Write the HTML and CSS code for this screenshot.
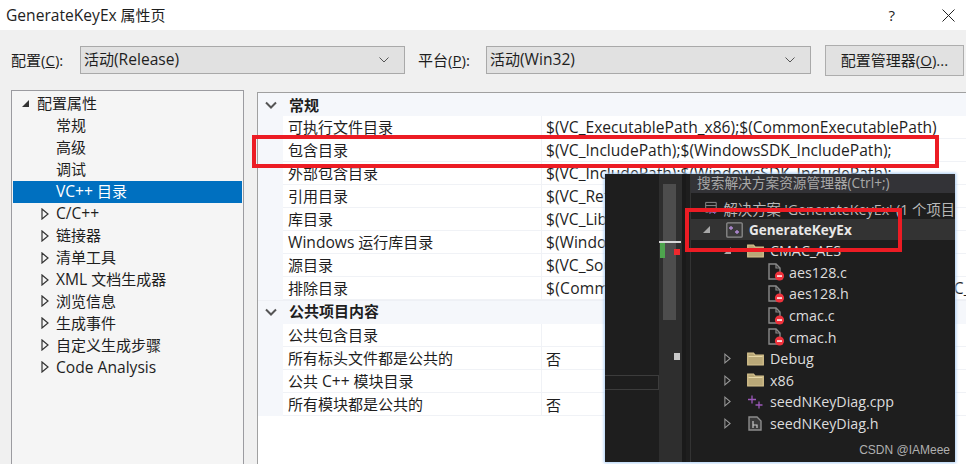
FILE: index.html
```html
<!DOCTYPE html>
<html lang="zh-CN">
<head>
<meta charset="utf-8">
<title>GenerateKeyEx 属性页</title>
<link rel="stylesheet" href="styles.css">
</head>
<body>
<svg class="defs" width="0" height="0">
  <symbol id="closed" viewBox="0 0 8 12"><path d="M1 1 L7 6 L1 11 Z" fill="none" stroke="currentColor" stroke-width="1.2"/></symbol>
  <symbol id="chev" viewBox="0 0 12 8"><path d="M1 1.5 L6 6.5 L11 1.5" fill="none" stroke="currentColor" stroke-width="2"/></symbol>
  <symbol id="down" viewBox="0 0 10 6"><path d="M.5 .5 L5 5 L9.5 .5" fill="none" stroke="currentColor" stroke-width="1"/></symbol>
  <symbol id="file" viewBox="0 0 18 18">
    <path d="M2 1 H9 L13 5 V16 H2 Z" fill="none" stroke="#8a8a8a" stroke-width="1.4"/>
    <path d="M9 1 V5 H13" fill="none" stroke="#8a8a8a" stroke-width="1.2"/>
    <circle cx="12.5" cy="13" r="4.6" fill="#f0323c"/>
    <rect x="10" y="12.3" width="5" height="1.5" fill="#fff"/>
  </symbol>
  <symbol id="folder" viewBox="0 0 17 14">
    <path d="M.7 12.8 V1.2 H6.5 L8 3 H16.3 V12.8 Z" fill="#b9a878" stroke="#d8c48e" stroke-width="1.2"/>
    <path d="M1.5 4.5 H15.5" stroke="#e6d6a6" stroke-width="1"/>
  </symbol>
</svg>
<div class="dialog">
  <header class="titlebar">
    <span class="title"><span class="lt">GenerateKeyEx</span> 属性页</span>
    <span class="help">?</span>
    <svg class="close" viewBox="0 0 13 13"><path d="M.5 .5 L12.5 12.5 M12.5 .5 L.5 12.5" stroke="#222" stroke-width="1"/></svg>
  </header>
  <main class="body">
    <div class="toolbar">
      <label class="lbl lbl-a">配置(<u>C</u>):</label>
      <div class="combo"><span>活动<span class="lt">(Release)</span></span><svg class="combo-arrow"><use href="#down"/></svg></div>
      <label class="lbl lbl-b">平台(<u>P</u>):</label>
      <div class="combo"><span>活动<span class="lt">(Win32)</span></span><svg class="combo-arrow"><use href="#down"/></svg></div>
      <button class="mgr">配置管理器(<u>O</u>)...</button>
    </div>
    <div class="panes">
      <nav class="tree">
        <div class="node root"><i class="tri-fill"></i>配置属性</div>
        <div class="node leaf">常规</div>
        <div class="node leaf">高级</div>
        <div class="node leaf">调试</div>
        <div class="node leaf sel"><span class="lt">VC++&nbsp;</span>目录</div>
        <div class="node lt"><svg class="tri"><use href="#closed"/></svg>C/C++</div>
        <div class="node"><svg class="tri"><use href="#closed"/></svg>链接器</div>
        <div class="node"><svg class="tri"><use href="#closed"/></svg>清单工具</div>
        <div class="node"><svg class="tri"><use href="#closed"/></svg><span class="lt">XML&nbsp;</span>文档生成器</div>
        <div class="node"><svg class="tri"><use href="#closed"/></svg>浏览信息</div>
        <div class="node"><svg class="tri"><use href="#closed"/></svg>生成事件</div>
        <div class="node"><svg class="tri"><use href="#closed"/></svg>自定义生成步骤</div>
        <div class="node lt"><svg class="tri"><use href="#closed"/></svg>Code Analysis</div>
      </nav>
      <section class="grid">
        <div class="cat"><svg class="chev"><use href="#chev"/></svg><b>常规</b></div>
        <div class="row"><span class="name">可执行文件目录</span><span class="val">$(VC_ExecutablePath_x86);$(CommonExecutablePath)</span></div>
        <div class="row"><span class="name">包含目录</span><span class="val">$(VC_IncludePath);$(WindowsSDK_IncludePath);</span></div>
        <div class="row"><span class="name">外部包含目录</span><span class="val">$(VC_IncludePath);$(WindowsSDK_IncludePath);</span></div>
        <div class="row"><span class="name">引用目录</span><span class="val">$(VC_ReferencesPath_x86);</span></div>
        <div class="row"><span class="name">库目录</span><span class="val">$(VC_LibraryPath_x86);$(WindowsSDK_LibraryPath_x86)</span></div>
        <div class="row"><span class="name"><span class="lt">Windows</span> 运行库目录</span><span class="val">$(WindowsSDK_MetadataPath);</span></div>
        <div class="row"><span class="name">源目录</span><span class="val">$(VC_SourcePath);</span></div>
        <div class="row"><span class="name">排除目录</span><span class="val wide">$(CommonExcludePath);$(VC_ExecutablePath_x86);$(VC_LibraryPath_x86)</span></div>
        <div class="cat"><svg class="chev"><use href="#chev"/></svg><b>公共项目内容</b></div>
        <div class="row"><span class="name">公共包含目录</span><span class="val"></span></div>
        <div class="row"><span class="name">所有标头文件都是公共的</span><span class="val cjk">否</span></div>
        <div class="row"><span class="name">公共 <span class="lt">C++</span> 模块目录</span><span class="val"></span></div>
        <div class="row"><span class="name">所有模块都是公共的</span><span class="val cjk">否</span></div>
      </section>
    </div>
  </main>
</div>

<aside class="dark">
  <div class="dark-left"><div class="ghost-field"></div></div>
  <div class="dark-scroll">
    <div class="thumb"></div>
    <div class="mark-line"></div>
    <div class="mark-green"></div>
    <div class="mark-red"></div>
    <div class="mark-white"></div>
  </div>
  <div class="dark-gap"></div>
  <div class="explorer">
    <div class="search">搜索解决方案资源管理器(Ctrl+;)</div>
    <ul class="items">
      <li class="item solution">
        <svg class="ic-sol" viewBox="0 0 18 18"><path d="M1 1 H16 V15 H9" fill="none" stroke="#8a8a8a" stroke-width="1.4"/><path d="M1 1 V15 H5 M1 5.5 H16" fill="none" stroke="#8a8a8a" stroke-width="1.4"/><path d="M7 11 L10 14 L14 10 V17 L10 13.5 L7 17 Z" fill="none" stroke="#9a63c8" stroke-width="1.4"/></svg>
        <span>解决方案 'GenerateKeyEx' (1 个项目</span>
      </li>
      <li class="item project">
        <i class="open-tri"></i>
        <svg class="ic-proj" viewBox="0 0 17 16"><rect x=".8" y=".8" width="15.4" height="14.4" rx="1" fill="#3a3a3a" stroke="#8d8d8d" stroke-width="1.3"/><path d="M5 4 V8 M3 6 H7 M11 8 V12 M9 10 H13" stroke="#b18ad6" stroke-width="1.3"/></svg>
        <b>GenerateKeyEx</b>
      </li>
      <li class="item lvl2"><i class="open-tri"></i><svg class="ic-folder"><use href="#folder"/></svg><span>CMAC_AES</span></li>
      <li class="item lvl3"><svg class="ic-file"><use href="#file"/></svg><span>aes128.c</span></li>
      <li class="item lvl3"><svg class="ic-file"><use href="#file"/></svg><span>aes128.h</span></li>
      <li class="item lvl3"><svg class="ic-file"><use href="#file"/></svg><span>cmac.c</span></li>
      <li class="item lvl3"><svg class="ic-file"><use href="#file"/></svg><span>cmac.h</span></li>
      <li class="item lvl2"><svg class="dtri"><use href="#closed"/></svg><svg class="ic-folder"><use href="#folder"/></svg><span>Debug</span></li>
      <li class="item lvl2"><svg class="dtri"><use href="#closed"/></svg><svg class="ic-folder"><use href="#folder"/></svg><span>x86</span></li>
      <li class="item lvl2"><svg class="dtri"><use href="#closed"/></svg><svg class="ic-cpp" viewBox="0 0 17 14"><path d="M5 .5 V8.5 M1 4.5 H9 M12 6.5 V13.5 M8.5 10 H15.5" stroke="#9a58b8" stroke-width="1.3"/></svg><span>seedNKeyDiag.cpp</span></li>
      <li class="item lvl2"><svg class="dtri"><use href="#closed"/></svg><svg class="ic-h" viewBox="0 0 14 15"><path d="M1 1 H9 L13 5 V14 H1 Z" fill="#3a3a3a" stroke="#8d8d8d" stroke-width="1.4"/><path d="M5 5 V12 M5 9 H9 V12" fill="none" stroke="#c8c8c8" stroke-width="1.2"/></svg><span>seedNKeyDiag.h</span></li>
    </ul>
  </div>
  <div class="watermark">CSDN @IAMeee</div>
</aside>

<div class="redbox box-a"></div>
<div class="redbox box-b"></div>
</body>
</html>
```
FILE: styles.css
```css
* { box-sizing: border-box; }
html, body { margin: 0; padding: 0; width: 966px; height: 464px; overflow: hidden; }
body {
  font-family: "Open Sans", "Noto Sans CJK SC", sans-serif;
  font-size: 15px;
  color: #1e1e1e;
  background: #f0f0f0;
  position: relative;
}
.defs { position: absolute; }
.lt { font-size: 15.6px; }
.dialog { display: flex; flex-direction: column; height: 464px; }

.titlebar { height: 30px; background: #fff; display: flex; align-items: center; padding: 0 11px 0 6px; flex: none; }
.title { flex: 1; }
.help { margin-right: 47px; font-size: 15px; color: #222; }
.close { width: 13px; height: 13px; }

.body { flex: 1; display: flex; flex-direction: column; min-height: 0; }

.toolbar { display: flex; align-items: center; height: 60px; padding: 0 2px 0 11px; flex: none; }
.lbl { flex: none; padding-bottom: 2px; }
.lbl-a { width: 69px; }
.lbl-b { width: 68px; margin-left: 13px; }
.combo {
  width: 325px; height: 28px; background: #e1e1e1; border: 1px solid #a9a9a9;
  display: flex; align-items: center; justify-content: space-between; padding: 0 15px 2px 3px;
}
.combo-arrow { width: 10px; height: 6px; color: #555; margin-top: 2px; }
.mgr {
  width: 139px; height: 31px; margin-left: 14px; background: #e1e1e1; border: 1px solid #adadad;
  font: inherit; color: inherit; padding: 0 0 2px;
}

.panes { flex: 1; display: flex; padding-left: 11px; min-height: 0; }
.tree {
  width: 233px; flex: none; background: #f5f5f5; border: 1px solid #9b9ba0; border-bottom: 0;
  padding: 2px 1px 0;
}
.node { height: 21.95px; line-height: 21px; padding-left: 43px; position: relative; white-space: nowrap; display: flex; align-items: center; }
.node.root { padding-left: 24px; }
.node.leaf { padding-left: 43px; }
.sel { background: #0070c0; color: #fff; }
.tri-fill { width: 0; height: 0; position: absolute; left: 9px; top: 7px; border-style: solid; border-width: 0 0 7px 7px; border-color: transparent transparent #333 transparent; }
.tri { position: absolute; left: 28px; top: 5px; width: 8px; height: 12px; color: #333; }

.grid { flex: 1; min-width: 0; overflow: hidden; margin-left: 13px; margin-top: 2px; background: #fff; border: 1px solid #a0a0a0; border-width: 1px 0 0 1px; }
.cat { height: 23px; background: #f5f7fb; display: flex; align-items: center; padding-left: 31px; position: relative; }
.cat b { font-weight: 700; }
.row + .cat { height: 24px; border-top: 1px solid #eef0f5; padding-bottom: 4px; }
.chev { position: absolute; left: 7px; top: 8px; width: 12px; height: 8px; color: #555; }
.row + .cat .chev { top: 7px; }
.row { height: 23px; display: flex; align-items: center; background: #fff; margin-left: 25px; border-bottom: 1px solid #f0f2f6; box-shadow: -25px 0 0 #f5f7fb; white-space: nowrap; }
.name { width: 259px; padding-left: 5px; height: 100%; line-height: 22px; border-right: 1px solid #f0f2f6; flex: none; }
.val { padding-left: 4px; flex: none; font-size: 15.6px; }
.val.cjk { font-size: 15px; }
.val.wide { letter-spacing: .27px; }

.dark {
  position: absolute; left: 605px; top: 174px; width: 350px; height: 288px;
  background: #1e1e1e; display: flex; color: #dcdcdc;
  box-shadow: 0 0 3px 1px #a9cdf5;
  font-size: 14.3px;
  overflow: hidden;
}
.dark-left { width: 54px; position: relative; flex: none; }
.ghost-field { margin-top: 201px; height: 15px; border: 1px solid #3c3c3c; border-left: 0; }
.dark-scroll { width: 23px; background: #2e2e2e; position: relative; flex: none; }
.thumb { position: absolute; left: 4px; width: 13px; top: 10px; height: 136px; background: #4d4d4d; }
.mark-line { position: absolute; left: 0; width: 22px; top: 67px; height: 2px; background: #d8d8d8; }
.mark-green { position: absolute; left: 1px; width: 5px; top: 69px; height: 15px; background: #4ea54e; }
.mark-red { position: absolute; left: 15px; width: 6px; top: 75px; height: 6px; background: #f0282d; }
.mark-white { position: absolute; left: 15px; width: 6px; top: 179px; height: 7px; background: #c8c8c8; }
.dark-gap { width: 9px; flex: none; background: #1e1e1e; border-left: 4px solid #1a1a1a; border-right: 1px solid #333; }
.explorer { flex: 1; min-width: 0; }
.search { height: 19px; line-height: 18px; background: #333337; padding-left: 6px; color: #a8a8a8; font-size: 13.7px; white-space: nowrap; }
.items { list-style: none; margin: 0; padding: 4px 0 0; }
.item { height: 21.6px; display: flex; align-items: center; position: relative; white-space: nowrap; color: #dcdcdc; }
.solution { padding-left: 14px; gap: 6px; color: #b8b8b8; height: 22px; }
.project { padding-left: 35px; background: #333; height: 21px; }
.project b { margin-left: 6px; font-weight: 700; font-size: 13.5px; color: #e8e8e8; }
.lvl2 { padding-left: 56px; }
.lvl3 { padding-left: 76px; }
.lvl2 span { margin-left: 6px; }
.lvl3 span { margin-left: 4px; }
.ic-sol { width: 18px; height: 18px; }
.ic-proj { width: 17px; height: 16px; }
.ic-folder { width: 17px; height: 14px; }
.ic-file { width: 18px; height: 18px; }
.ic-cpp { width: 17px; height: 14px; }
.ic-h { width: 14px; height: 15px; margin: 0 2px 0 1px; }
.open-tri { position: absolute; top: 7px; left: 12px; width: 0; height: 0; border-style: solid; border-width: 0 0 7px 7px; border-color: transparent transparent #a8a8a8 transparent; }
.lvl2 .open-tri { left: 33px; }
.dtri { position: absolute; left: 33px; top: 5px; width: 7px; height: 11px; color: #999; }
.watermark { position: absolute; right: 5px; bottom: 5px; font-family: "Liberation Sans", sans-serif; font-size: 12px; color: #b0b0b0; }

.redbox { position: absolute; border: 4px solid #ec1c24; }
.box-a { left: 252px; top: 135px; width: 687px; height: 33px; }
.box-b { left: 685px; top: 208px; width: 217px; height: 44px; }
```
